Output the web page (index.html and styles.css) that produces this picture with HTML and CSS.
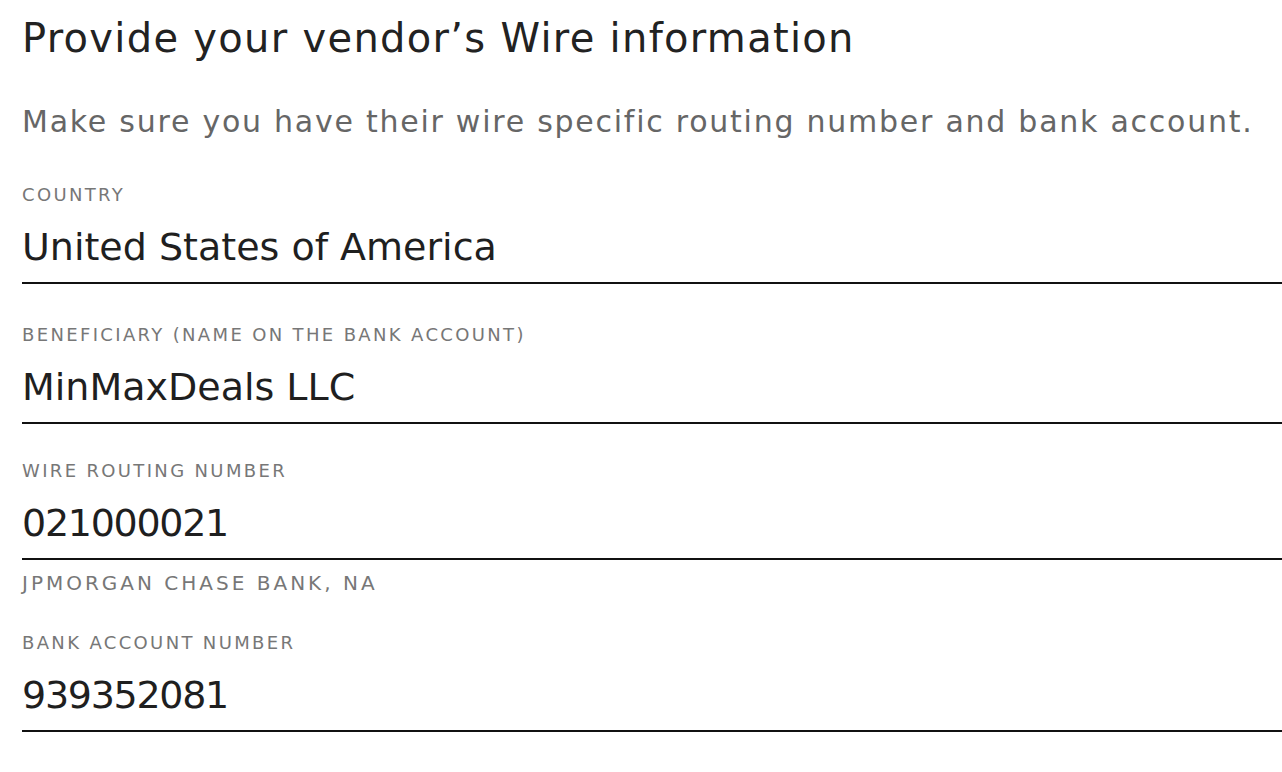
FILE: index.html
```html
<!DOCTYPE html>
<html>
<head>
    <title>Vendor wire information</title>
    <meta charset="UTF-8">
    <link rel="stylesheet" href="styles.css">
</head>
<body>

<form class="wire-form">
    <h1 class="title">Provide your vendor’s Wire information</h1>
    <p class="subtitle">Make sure you have their wire specific routing number and bank account.</p>

    <div class="fields">
        <div class="field field-first">
            <label class="field-label">Country</label>
            <div class="field-value">United States of America</div>
        </div>

        <div class="field">
            <label class="field-label">Beneficiary (name on the bank account)</label>
            <div class="field-value">MinMaxDeals LLC</div>
        </div>

        <div class="field">
            <label class="field-label">Wire routing number</label>
            <div class="field-value number">021000021</div>
            <div class="field-hint">JPMorgan Chase Bank, NA</div>
        </div>

        <div class="field">
            <label class="field-label">Bank account number</label>
            <div class="field-value number">939352081</div>
        </div>
    </div>
</form>

</body>
</html>
```

FILE: styles.css
```css
body{
    margin: 0;
    padding: 14px 0 0 22px;
    background-color: #ffffff;
    font-family: "DejaVu Sans", "Open Sans", Arial, sans-serif;
    color: #222222;
}

.title{
    margin: 0;
    font-size: 40px;
    line-height: 48px;
    font-weight: normal;
    letter-spacing: 1.3px;
    color: #222222;
}

.subtitle{
    margin: 40px 0 0 0;
    font-size: 30px;
    line-height: 40px;
    letter-spacing: 1.75px;
    color: #666666;
}

.fields{
    display: flex;
    flex-direction: column;
    gap: 35px;
    margin-top: 41px;
}

.field-first{
    margin-bottom: 4px;
}

.field-label,
.field-hint{
    display: block;
    font-size: 18px;
    line-height: 24px;
    letter-spacing: 2.35px;
    text-transform: uppercase;
    color: #777777;
}

.field-value{
    margin-top: 16px;
    padding-bottom: 11px;
    border-bottom: 2px solid #111111;
    font-size: 38px;
    line-height: 48px;
    color: #1f1f1f;
}

.field-value.number{
    letter-spacing: -1.3px;
}

.field-hint{
    margin: 11px 0 1px 0;
    font-size: 20px;
    letter-spacing: 3px;
}
```
